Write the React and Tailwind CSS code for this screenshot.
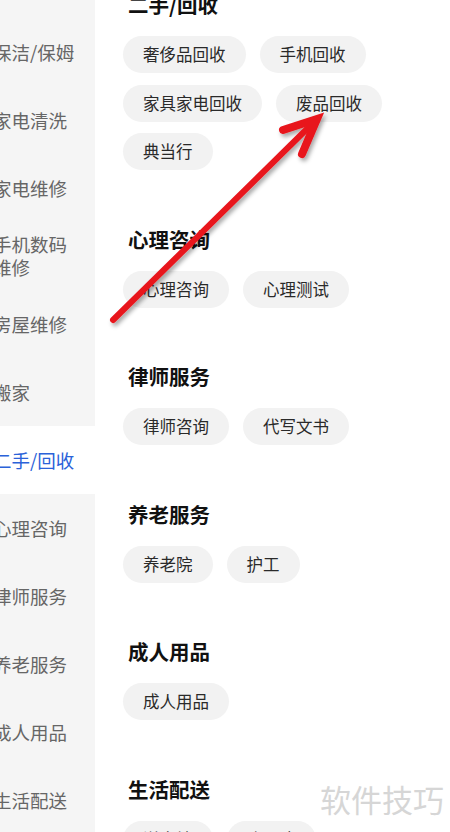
import React from "react";

const sideItems = [
  "保洁/保姆",
  "家电清洗",
  "家电维修",
  "手机数码维修",
  "房屋维修",
  "搬家",
  "二手/回收",
  "心理咨询",
  "律师服务",
  "养老服务",
  "成人用品",
  "生活配送",
];

const sections = [
  { title: "二手/回收", tags: ["奢侈品回收", "手机回收", "家具家电回收", "废品回收", "典当行"] },
  { title: "心理咨询", tags: ["心理咨询", "心理测试"] },
  { title: "律师服务", tags: ["律师咨询", "代写文书"] },
  { title: "养老服务", tags: ["养老院", "护工"] },
  { title: "成人用品", tags: ["成人用品"] },
  { title: "生活配送", tags: ["送水站", "跑腿购"] },
];

const font = { fontFamily: '"Noto Sans CJK SC", "Noto Sans", sans-serif' };

export default function App() {
  const active = "二手/回收";

  return (
    <div
      className="relative flex h-[832px] w-[450px] overflow-hidden bg-white"
      style={font}
    >
      {/* left category list */}
      <aside className="w-[95px] shrink-0 bg-[#f5f5f5] pt-[18px]">
        {sideItems.map((item) => (
          <div
            key={item}
            className={`flex h-[68px] items-center ${item === active ? "bg-white" : ""}`}
          >
            <span
              className={`-ml-[7px] w-[84px] text-[18.5px] leading-[23px] ${
                item === active ? "text-[#2b62d9]" : "text-[#666]"
              }`}
            >
              {item}
            </span>
          </div>
        ))}
      </aside>

      {/* right tag sections */}
      <main className="flex-1 pl-[28px] mt-[-10px]">
        {sections.map((s) => (
          <section key={s.title} className="pb-[54.5px]">
            <h2 className="pl-[5px] text-[20.5px] font-bold leading-[28px] text-[#111] mb-[18px]">
              {s.title}
            </h2>
            <div className="flex flex-wrap gap-x-[14px] gap-y-[11.5px] pr-[60px]">
              {s.tags.map((t) => (
                <span
                  key={t}
                  className="flex h-[37px] items-center rounded-full bg-[#f2f2f2] px-[20px] text-[16.5px] text-[#2a2a2a]"
                >
                  {t}
                </span>
              ))}
            </div>
          </section>
        ))}
      </main>

      {/* watermark */}
      <div className="pointer-events-none absolute left-[320px] top-[780px] text-[31px] leading-[38px] text-[#d6d6d6]">
        软件技巧
      </div>

      {/* red annotation arrow */}
      <svg
        className="pointer-events-none absolute left-0 top-0"
        width="450"
        height="832"
        viewBox="0 0 450 832"
      >
        <defs>
          <filter id="sh" x="-20%" y="-20%" width="140%" height="140%">
            <feDropShadow dx="2" dy="3" stdDeviation="2" floodColor="#000" floodOpacity="0.35" />
          </filter>
        </defs>
        <g filter="url(#sh)" stroke="#e8141c" strokeLinecap="round" fill="none">
          <line x1="113" y1="320" x2="312" y2="124" strokeWidth="6" />
          <path d="M283 130 L317 119 L302 154" strokeWidth="8" strokeLinejoin="miter" />
        </g>
      </svg>
    </div>
  );
}
